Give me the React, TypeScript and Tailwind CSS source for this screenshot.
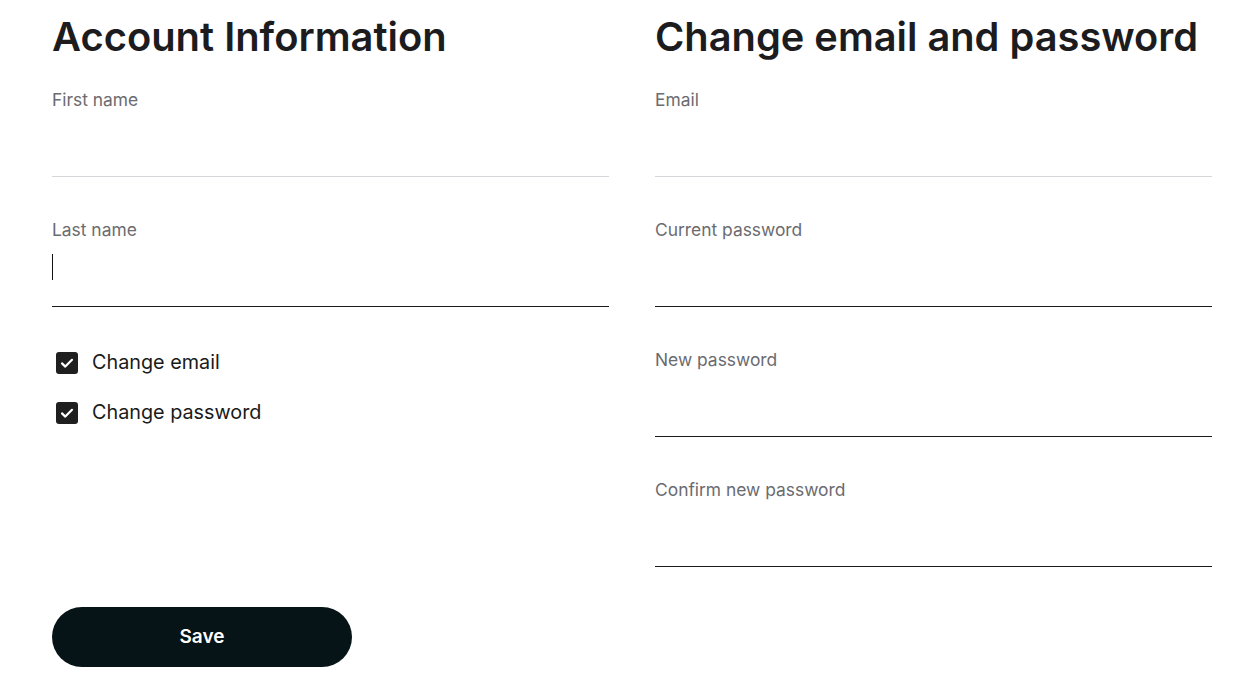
import React from 'react';

function Field({ label, focused, muted }: { label: string; focused?: boolean; muted?: boolean }) {
  return (
    <div className="flex flex-col">
      <label className="text-[17.4px] leading-[22px] text-[#6b6b70]">{label}</label>
      <div
        className={`relative h-[66px] border-b ${muted ? 'border-[#d6d6da]' : 'border-[#1a1a1a]'}`}
      >
        {focused && <div className="absolute left-0 top-[13px] h-[26px] w-px bg-[#111]" />}
      </div>
    </div>
  );
}

function Check({ label }: { label: string }) {
  return (
    <div className="flex h-[28px] items-center">
      <div className="ml-[4px] flex h-[22px] w-[22px] items-center justify-center rounded-[3px] bg-[#1f1f1f]">
        <svg width="22" height="22" viewBox="0 0 22 22" fill="none">
          <path d="M6 11.4l3.3 3.2L16 7.8" stroke="#fff" strokeWidth="2.2" strokeLinecap="round" strokeLinejoin="round" />
        </svg>
      </div>
      <span className="ml-[14px] text-[19.8px] text-[#1a1a1a]">{label}</span>
    </div>
  );
}

export default function App() {
  return (
    <div
      className="min-h-screen bg-white px-[52px] pt-[13px]"
      style={{ fontFamily: 'Inter, "Noto Sans", sans-serif' }}
    >
      <div className="grid w-[1160px] grid-cols-2 gap-x-[46px]">
        {/* Account info */}
        <div className="flex flex-col">
          <h1 className="mb-[28px] text-[39.9px] leading-[48px] font-semibold text-[#1c1c1e]">Account Information</h1>
          <div className="flex flex-col gap-[42px]">
            <Field label="First name" muted />
            <Field label="Last name" focused />
            <div className="flex flex-col gap-[22px]">
              <Check label="Change email" />
              <Check label="Change password" />
            </div>
          </div>
        </div>

        {/* Email / password */}
        <div className="flex flex-col">
          <h1 className="mb-[28px] text-[39.8px] leading-[48px] font-semibold text-[#1c1c1e]">Change email and password</h1>
          <div className="flex flex-col gap-[42px]">
            <Field label="Email" muted />
            <Field label="Current password" />
            <Field label="New password" />
            <Field label="Confirm new password" />
          </div>
        </div>
      </div>

      <button className="mt-[40px] flex h-[60px] w-[300px] items-center justify-center rounded-full bg-[#071417] text-[19px] font-semibold text-white">
        Save
      </button>
    </div>
  );
}
